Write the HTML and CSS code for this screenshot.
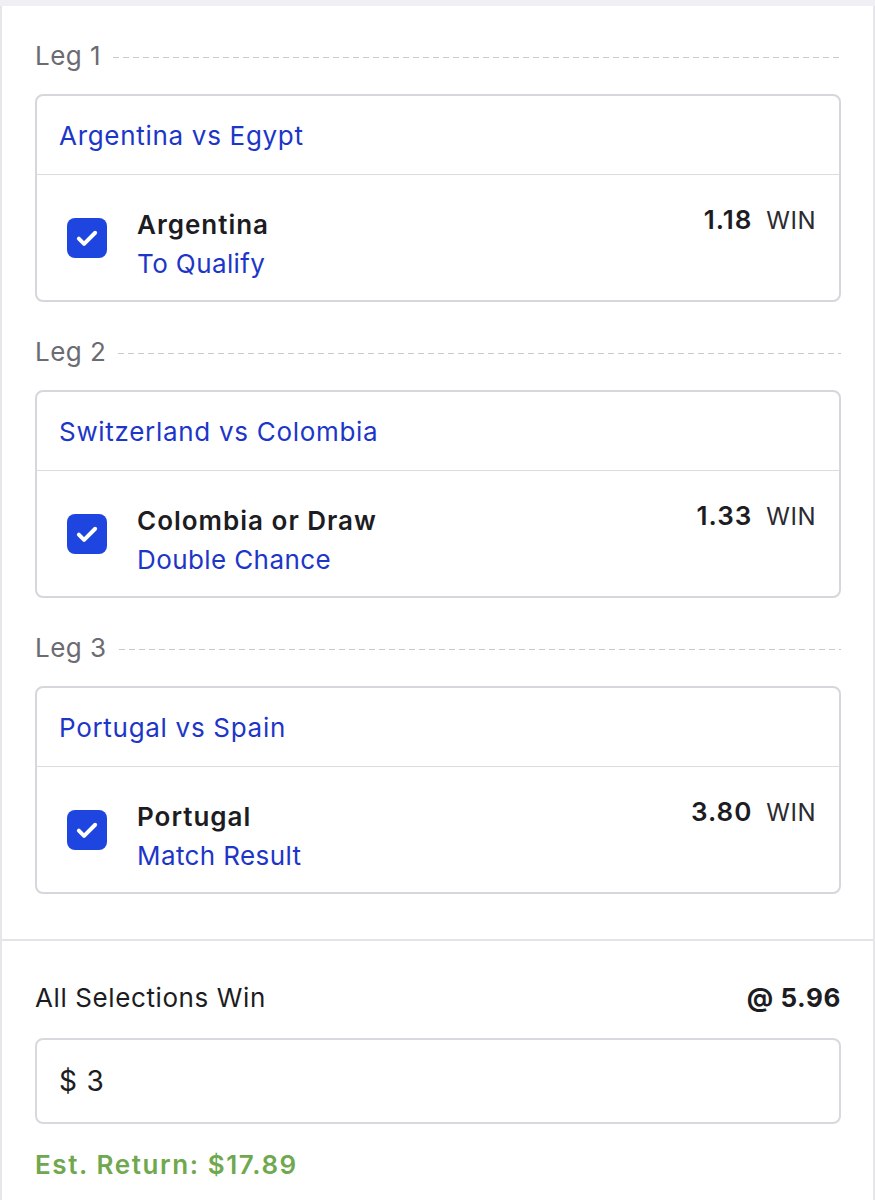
FILE: index.html
```html
<!DOCTYPE html>
<html lang="en">
<head>
    <meta charset="UTF-8">
    <title>Bet Slip</title>
    <link rel="stylesheet" href="styles.css">
</head>
<body>
    <div class="slip">
        <div class="legs">
            <div class="leg">
                <div class="leg-label"><span>Leg 1</span><div class="dash"></div></div>
                <div class="card">
                    <div class="card-head">Argentina vs Egypt</div>
                    <div class="selection">
                        <div class="check">
                            <svg viewBox="0 0 24 24" width="28" height="28"><path d="M5 12.5l4.5 4.5L19 7.5" fill="none" stroke="#fff" stroke-width="3.4" stroke-linecap="round" stroke-linejoin="round"/></svg>
                        </div>
                        <div class="sel-text">
                            <div class="sel-name">Argentina</div>
                            <div class="sel-market">To Qualify</div>
                        </div>
                        <div class="odds"><b>1.18</b><span>WIN</span></div>
                    </div>
                </div>
            </div>

            <div class="leg">
                <div class="leg-label"><span>Leg 2</span><div class="dash"></div></div>
                <div class="card">
                    <div class="card-head">Switzerland vs Colombia</div>
                    <div class="selection">
                        <div class="check">
                            <svg viewBox="0 0 24 24" width="28" height="28"><path d="M5 12.5l4.5 4.5L19 7.5" fill="none" stroke="#fff" stroke-width="3.4" stroke-linecap="round" stroke-linejoin="round"/></svg>
                        </div>
                        <div class="sel-text">
                            <div class="sel-name">Colombia or Draw</div>
                            <div class="sel-market">Double Chance</div>
                        </div>
                        <div class="odds"><b>1.33</b><span>WIN</span></div>
                    </div>
                </div>
            </div>

            <div class="leg">
                <div class="leg-label"><span>Leg 3</span><div class="dash"></div></div>
                <div class="card">
                    <div class="card-head">Portugal vs Spain</div>
                    <div class="selection">
                        <div class="check">
                            <svg viewBox="0 0 24 24" width="28" height="28"><path d="M5 12.5l4.5 4.5L19 7.5" fill="none" stroke="#fff" stroke-width="3.4" stroke-linecap="round" stroke-linejoin="round"/></svg>
                        </div>
                        <div class="sel-text">
                            <div class="sel-name">Portugal</div>
                            <div class="sel-market">Match Result</div>
                        </div>
                        <div class="odds"><b>3.80</b><span>WIN</span></div>
                    </div>
                </div>
            </div>
        </div>

        <div class="summary">
            <div class="summary-row">
                <span>All Selections Win</span>
                <b>@ 5.96</b>
            </div>
            <div class="stake">$ 3</div>
            <div class="est-return">Est. Return: $17.89</div>
        </div>
    </div>
</body>
</html>
```

FILE: styles.css
```css
body {
    margin: 0;
    background: #f0f0f4;
    font-family: Inter, "Noto Sans", sans-serif;
    color: #1c1c22;
}
.slip {
    margin-top: 6px;
    background: white;
    border-left: 2px solid #e6e6ea;
    border-right: 2px solid #e6e6ea;
    min-height: 1194px;
    box-sizing: border-box;
}
.legs {
    padding: 35px 32px 10px 33px;
}
.leg {
    margin-bottom: 35px;
}
.leg-label {
    display: flex;
    align-items: center;
    font-size: 26px;
    letter-spacing: 0.5px;
    line-height: 30px;
    color: #6b6b72;
    margin-bottom: 23px;
}
.dash {
    flex: 1;
    height: 1px;
    margin-left: 12px;
    margin-top: 2px;
    background: repeating-linear-gradient(90deg, #c9c9d2 0 6px, transparent 6px 10px);
}
.card {
    border: 2px solid #d6d6dc;
    border-radius: 8px;
}
.card-head {
    height: 78px;
    display: flex;
    align-items: center;
    padding: 0 22px;
    font-size: 26px;
    letter-spacing: 0.7px;
    color: #1d36c8;
    border-bottom: 1px solid #dadae0;
}
.selection {
    display: flex;
    align-items: flex-start;
    padding: 30px 23px 17px 30px;
}
.check {
    width: 40px;
    height: 40px;
    margin-top: 13px;
    border-radius: 8px;
    background: #1f45e0;
    display: flex;
    align-items: center;
    justify-content: center;
}
.sel-text {
    flex: 1;
    margin-left: 30px;
    font-size: 26px;
    line-height: 39px;
}
.sel-name {
    font-weight: 600;
    letter-spacing: 1px;
    color: #1c1c22;
}
.sel-market {
    letter-spacing: 0.4px;
    color: #1d36c8;
}
.odds {
    line-height: 30px;
    font-size: 26px;
}
.odds b {
    font-weight: 600;
    letter-spacing: 1px;
}
.odds span {
    margin-left: 14px;
    font-size: 24px;
    letter-spacing: 0.5px;
    color: #2a2a30;
}
.summary {
    border-top: 2px solid #e3e3e8;
    padding: 42px 32px 30px 33px;
}
.summary-row {
    display: flex;
    justify-content: space-between;
    font-size: 26px;
    letter-spacing: 0.6px;
    line-height: 30px;
    margin-bottom: 25px;
}
.summary-row b {
    font-weight: 700;
}
.stake {
    height: 82px;
    border: 2px solid #d8d8de;
    border-radius: 8px;
    display: flex;
    align-items: center;
    padding: 0 22px;
    font-size: 28px;
    letter-spacing: 0.8px;
}
.est-return {
    margin-top: 26px;
    font-size: 26px;
    letter-spacing: 1.6px;
    line-height: 30px;
    font-weight: 600;
    color: #6fa84e;
}
```
